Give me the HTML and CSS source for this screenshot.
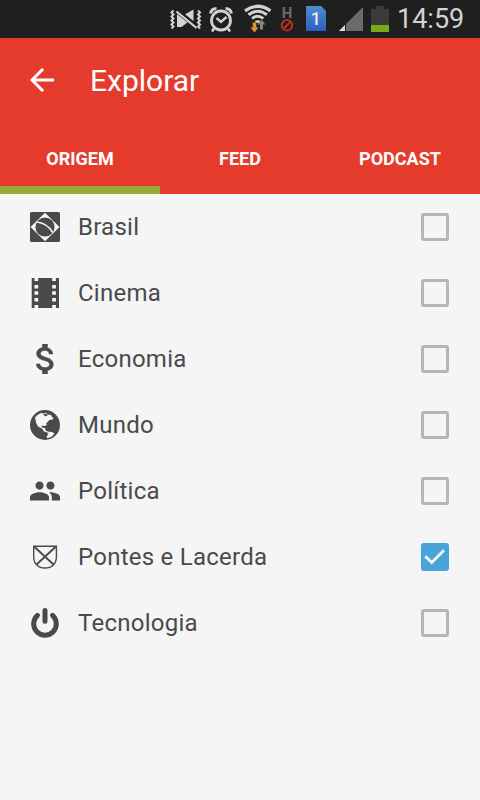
FILE: index.html
```html
<!DOCTYPE html>
<html lang="pt-BR">
<head>
<meta charset="utf-8">
<title>Explorar</title>
<link rel="stylesheet" href="styles.css">
</head>
<body>
<div class="status">
  <svg class="vibrate" width="32" height="38" viewBox="170 0 32 38" fill="none" stroke="#d2d2d2">
    <path d="M177 14v13h4.500l6-4.500z" fill="#d2d2d2" stroke="none"/>
    <path d="M183 15.500l10.500-6v16z" fill="#d2d2d2" stroke="none"/>
    <path d="M178.500 10.500l19 15.500" stroke="#1f1f1f" stroke-width="2.500"/>
    <path d="M176.500 11.500l20 16.500" stroke-width="2.200"/>
    <path d="M173.500 10.500l-2 2 2 2-2 2 2 2-2 2 2 2-2 2 2 2-2 2M198 10.500l2 2-2 2 2 2-2 2 2 2-2 2 2 2-2 2 2 2" stroke-width="2"/>
  </svg>
  <svg class="alarm" width="24" height="38" viewBox="209 0 24 38" fill="none" stroke="#d2d2d2">
    <circle cx="221" cy="20.500" r="9.500" stroke-width="2.800"/>
    <path d="M210.500 13.500q1-5 6-5M231.500 13.500q-1-5-6-5" stroke-width="3"/>
    <path d="M216.500 18l4.500 4 5.500-5" stroke-width="2.400"/>
    <path d="M214 28.500l-2 3M228 28.500l2 3" stroke-width="2.500"/>
  </svg>
  <svg class="wifi" width="28" height="38" viewBox="244 0 28 38" fill="none" stroke="#d2d2d2">
    <path d="M245 10.800q12.700-9 25.400 0" stroke-width="3.400"/>
    <path d="M248.500 14.800q9.200-7 18.400 0" stroke-width="3"/>
    <path d="M252 18.500q5.700-4.500 11.400 0" stroke-width="2.800"/>
    <path d="M254.500 21.300q3.200-2.200 6.400 0l-3.200 2z" fill="#d2d2d2" stroke="none"/>
    <path d="M252.700 22.500h3.600v5h2.200l-4 5-4-5h2.200z" fill="#dc9232" stroke="none"/>
    <path d="M260 29.500v-5h-2.300l3.800-5 3.800 5H263v5z" fill="#858585" stroke="none"/>
  </svg>
  <svg class="net" width="14" height="38" viewBox="280 0 14 38">
    <text x="287" y="17.500" class="net-letter" text-anchor="middle">H</text>
    <circle cx="287" cy="25.200" r="5.200" fill="none" stroke="#bd2b1c" stroke-width="2"/>
    <path d="M290.500 21.700l-7 7" stroke="#bd2b1c" stroke-width="2"/>
  </svg>
  <svg class="sim" width="20" height="38" viewBox="306 0 20 38">
    <defs><linearGradient id="simfill" x2="0" y2="1"><stop stop-color="#4a8fcc"/><stop offset="1" stop-color="#2c5fc0"/></linearGradient></defs>
    <path d="M306 6h15l5 5v20h-20z" fill="url(#simfill)"/>
    <text x="315.800" y="25" class="sim-digit" text-anchor="middle">1</text>
  </svg>
  <svg class="signal" width="24" height="38" viewBox="339 0 24 38">
    <path d="M363 7v24h-24z" fill="#6b6b6b"/>
    <path d="M345 25v6h-6z" fill="#dedede"/>
    <path d="M345.500 24v7" stroke="#1f1f1f"/>
  </svg>
  <svg class="battery" width="18" height="38" viewBox="371 0 18 38">
    <path d="M371 9h5V6h8v3h5v16h-18z" fill="#3b3b3b"/>
    <path d="M371 25h18v7h-18z" fill="#7aaa16"/>
  </svg>
  <span class="clock">14:59</span>
</div>
<header class="header">
  <div class="toolbar">
    <svg width="24" height="24" viewBox="0 0 24 24" fill="none" stroke="#fff" stroke-width="3"><path d="M24 12H2.500M13 1L2 12l11 11"/></svg>
    <h1 class="title">Explorar</h1>
  </div>
  <nav class="tabs">
    <div class="tab active">ORIGEM</div>
    <div class="tab">FEED</div>
    <div class="tab">PODCAST</div>
  </nav>
</header>
<main class="list">
  <div class="row">
    <svg class="icon" viewBox="0 0 30 30"><rect width="30" height="30" rx="1.500" fill="#4a4a4a"/><path d="M15 .7L29.500 15 15 29.300.5 15z" fill="#f5f5f5"/><circle cx="15" cy="15" r="9.600" fill="#4a4a4a"/><path d="M6.500 10Q17 11 22.800 20.500" fill="none" stroke="#f5f5f5" stroke-width="1.600"/></svg>
    <span class="label">Brasil</span><span class="box"></span>
  </div>
  <div class="row">
    <svg class="icon" viewBox="0 0 30 30"><path d="M1.700 0h27.300v30H1.700z" fill="#4a4a4a"/><path d="M4.500 0h3.700v3h-3.700zM22.200 0h3.700v3h-3.700zM4.500 7h3.700v3.500h-3.700zM22.200 7h3.700v3.500h-3.700zM4.500 13.300h3.700v3.500h-3.700zM22.200 13.300h3.700v3.500h-3.700zM4.500 20h3.700v3.500h-3.700zM22.200 20h3.700v3.500h-3.700zM4.500 27h3.700v3h-3.700zM22.200 27h3.700v3h-3.700z" fill="#f5f5f5"/></svg>
    <span class="label">Cinema</span><span class="box"></span>
  </div>
  <div class="row">
    <svg class="icon" viewBox="0 0 30 30"><path transform="translate(-4.200 -5) scale(1.667)" d="M11.800 10.900c-2.270-.59-3-1.200-3-2.150 0-1.090 1.010-1.850 2.700-1.850 1.780 0 2.440.85 2.500 2.100h2.210c-.07-1.720-1.120-3.300-3.210-3.810V3h-3v2.160c-1.940.42-3.500 1.680-3.500 3.610 0 2.310 1.910 3.460 4.700 4.130 2.500.6 3 1.480 3 2.410 0 .69-.49 1.790-2.700 1.790-2.060 0-2.870-.92-2.980-2.100h-2.200c.12 2.190 1.760 3.420 3.680 3.830V21h3v-2.150c1.950-.37 3.500-1.500 3.500-3.550 0-2.840-2.430-3.810-4.700-4.400z" fill="#4a4a4a" stroke="#4a4a4a" stroke-width=".3"/></svg>
    <span class="label">Economia</span><span class="box"></span>
  </div>
  <div class="row">
    <svg class="icon" viewBox="0 0 30 30"><circle cx="15" cy="15" r="15" fill="#4a4a4a"/><path d="M5 7.500q2.500-3.500 6-4.500l3 .5 2-.5 1.500 1.500 3.500.5 1 2 1.500 1-1 1.500-3 .5-3.500 3.500 1 1.500-2.500 1-3-.5.500 2 3 .5 1 3 3.500.8-1.500 1-4-1.200-2-3-4-2-2-4z" fill="#f5f5f5"/><path d="M13 4.200l2 2 3-1-1.500-1.200z" fill="#4a4a4a"/><path d="M17.500 22.500l4-.8 3 1.800-2.500 3-4.500 1.800-1-1.500 1.500-2.300z" fill="#f5f5f5"/></svg>
    <span class="label">Mundo</span><span class="box"></span>
  </div>
  <div class="row">
    <svg class="icon" viewBox="0 0 30 30"><path transform="translate(-1.360 -1.360) scale(1.3636)" d="M16 11c1.660 0 2.990-1.340 2.990-3S17.660 5 16 5s-3 1.340-3 3 1.340 3 3 3zm-8 0c1.660 0 2.990-1.340 2.990-3S9.660 5 8 5 5 6.340 5 8s1.340 3 3 3zm0 2c-2.330 0-7 1.170-7 3.500V19h14v-2.500c0-2.330-4.670-3.500-7-3.500zm8 0c-.29 0-.62.020-.97.050 1.160.84 1.970 1.970 1.970 3.450V19h6v-2.500c0-2.330-4.670-3.500-7-3.500z" fill="#4a4a4a"/></svg>
    <span class="label">Política</span><span class="box"></span>
  </div>
  <div class="row">
    <svg class="icon" viewBox="0 0 30 30" fill="none" stroke="#4a4a4a"><path d="M3.700 4.200h22.700V15c0 6.500-4.500 11-11.400 11S3.700 21.500 3.700 15z" stroke-width="1.400"/><path d="M4 4.500l19.500 18M26 4.500l-19.500 18" stroke-width="1.900"/></svg>
    <span class="label">Pontes e Lacerda</span>
    <span class="box checked"><svg width="28" height="28" viewBox="0 0 28 28"><path d="M4.300 13.200l6.400 6.300L23 7.200" fill="none" stroke="#f5f5f5" stroke-width="2.900"/></svg></span>
  </div>
  <div class="row">
    <svg class="icon" viewBox="0 0 30 30" fill="none" stroke="#4a4a4a" stroke-linecap="round" stroke-width="5"><path d="M7.500 7.400a11.300 11.300 0 1 0 15 0M15 2.500v10.700"/></svg>
    <span class="label">Tecnologia</span><span class="box"></span>
  </div>
</main>
</body>
</html>
```
FILE: styles.css
```css
* { box-sizing: border-box; }

body {
  margin: 0;
  width: 480px;
  height: 800px;
  overflow: hidden;
  background: #f5f5f5;
  font-family: Roboto, sans-serif;
}

.status {
  display: flex;
  height: 38px;
  padding-left: 170px;
  background: #1f1f1f;
}

.status svg { flex: none; }
.alarm { margin-left: 7px; }
.wifi { margin-left: 11px; }
.net { margin-left: 8px; }
.sim { margin-left: 12px; }
.signal { margin-left: 13px; }
.battery { margin-left: 8px; }

.net-letter { font-size: 15px; font-weight: 700; fill: #6b6b6b; }
.sim-digit { font-size: 18px; font-weight: 500; fill: #e8e8e8; }

.clock {
  margin-left: 8px;
  color: #d2d2d2;
  font-size: 27px;
  line-height: 38px;
}

.header {
  height: 156px;
  background: #e53b2c;
  color: #fff;
}

.toolbar {
  display: flex;
  align-items: center;
  height: 84px;
  padding-left: 30px;
}

.title {
  margin: 0 0 0 36px;
  padding-top: 2px;
  font-size: 30px;
  font-weight: 400;
  line-height: 36px;
}

.tabs {
  display: grid;
  grid-template-columns: repeat(3, 1fr);
  height: 72px;
}

.tab {
  padding-top: 10px;
  border-bottom: 8px solid transparent;
  text-align: center;
  font-size: 18px;
  font-weight: 700;
  line-height: 54px;
}

.tab.active { border-bottom-color: #97aa3a; }

.row {
  display: flex;
  align-items: center;
  height: 66px;
  padding: 0 31px 0 30px;
}

.icon {
  flex: none;
  width: 30px;
  height: 30px;
}

.label {
  flex: 1;
  margin-left: 18px;
  color: #4a4a4a;
  font-size: 24px;
  letter-spacing: 0.25px;
  line-height: 32px;
}

.box {
  width: 28px;
  height: 28px;
  border: 3px solid #b6b6b6;
  border-radius: 3px;
}

.box.checked {
  border: 0;
  background: #48a4d9;
}

.box svg { display: block; }
```
